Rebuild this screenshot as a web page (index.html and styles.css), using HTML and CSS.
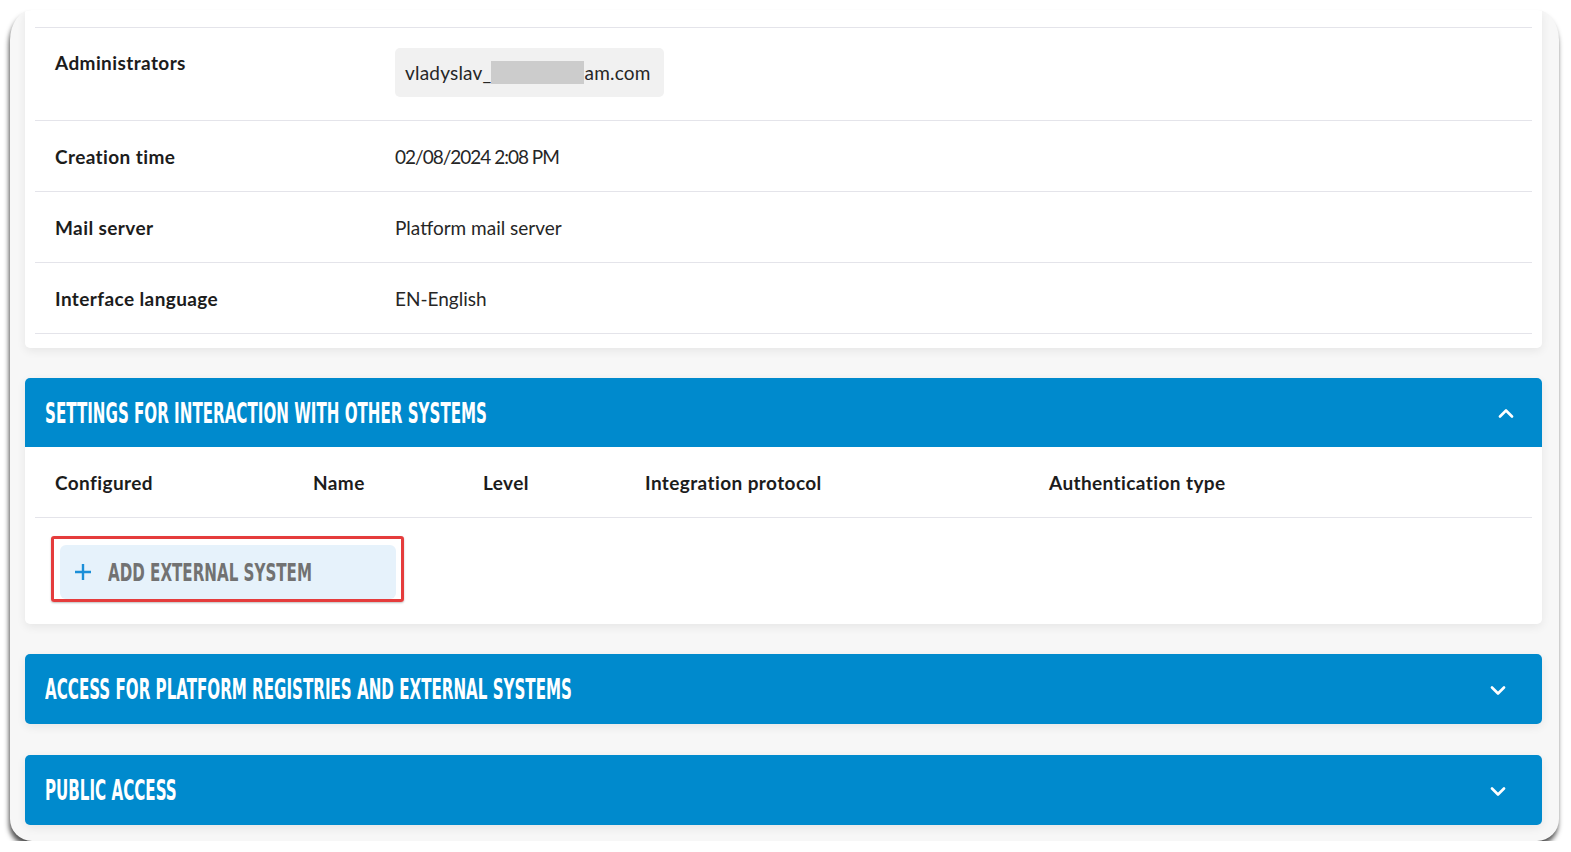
FILE: index.html
```html
<!DOCTYPE html>
<html lang="en">
<head>
<meta charset="utf-8">
<title>Settings</title>
<link rel="stylesheet" href="styles.css">
</head>
<body>
<div class="frame">
  <section class="card info">
    <div class="row row-admin">
      <div class="label label-top">Administrators</div>
      <div class="value"><span class="chip">vladyslav_<span class="redact"></span>am.com</span></div>
    </div>
    <div class="row">
      <div class="label">Creation time</div>
      <div class="value num">02/08/2024 2:08 PM</div>
    </div>
    <div class="row">
      <div class="label">Mail server</div>
      <div class="value">Platform mail server</div>
    </div>
    <div class="row">
      <div class="label">Interface language</div>
      <div class="value">EN-English</div>
    </div>
  </section>

  <section class="card panel">
    <header class="panel-head open">
      <span class="panel-title">SETTINGS FOR INTERACTION WITH OTHER SYSTEMS</span>
      <svg class="chev chev-up" width="16" height="10" viewBox="0 0 16 10"><path d="M2 8.5 L8 2.5 L14 8.5" fill="none" stroke="#fff" stroke-width="2.6" stroke-linecap="round" stroke-linejoin="round"/></svg>
    </header>
    <div class="table-head">
      <div>Configured</div>
      <div>Name</div>
      <div>Level</div>
      <div>Integration protocol</div>
      <div>Authentication type</div>
    </div>
    <div class="add-area">
      <div class="highlight">
        <button class="add-btn">
          <svg class="plus" width="18" height="18" viewBox="0 0 18 18"><path d="M9 1 V17 M1 9 H17" stroke="#1b8fd8" stroke-width="2.4" fill="none"/></svg>
          <span class="add-text">ADD EXTERNAL SYSTEM</span>
        </button>
      </div>
    </div>
  </section>

  <section class="panel-closed">
    <header class="panel-head closed">
      <span class="panel-title">ACCESS FOR PLATFORM REGISTRIES AND EXTERNAL SYSTEMS</span>
      <svg class="chev chev-down" width="16" height="10" viewBox="0 0 16 10"><path d="M2 1.5 L8 7.5 L14 1.5" fill="none" stroke="#fff" stroke-width="2.6" stroke-linecap="round" stroke-linejoin="round"/></svg>
    </header>
  </section>

  <section class="panel-closed">
    <header class="panel-head closed">
      <span class="panel-title">PUBLIC ACCESS</span>
      <svg class="chev chev-down" width="16" height="10" viewBox="0 0 16 10"><path d="M2 1.5 L8 7.5 L14 1.5" fill="none" stroke="#fff" stroke-width="2.6" stroke-linecap="round" stroke-linejoin="round"/></svg>
    </header>
  </section>
</div>
</body>
</html>
```

FILE: styles.css
```css
* { box-sizing: border-box; }

html, body {
  margin: 0;
  padding: 0;
  background: #ffffff;
}

body {
  font-family: Lato, "Noto Sans", Arial, sans-serif;
  color: #1f1f1f;
  font-size: 19px;
}

.frame {
  margin: 10px 12px 0 10px;
  height: 831px;
  background: #f7f7f7;
  border-radius: 0 0 22px 22px;
  border-top-left-radius: 22px 30px;
  border-top-right-radius: 22px 30px;
  box-shadow: -1px 5px 5px rgba(0, 0, 0, 0.68);
  padding: 0 17px 16px 15px;
  overflow: hidden;
}

.card {
  background: #ffffff;
  border-radius: 0 0 5px 5px;
  box-shadow: 0 3px 10px rgba(0, 0, 0, 0.07);
}

.info {
  padding: 17px 10px 14px;
}

.row {
  display: grid;
  grid-template-columns: 340px 1fr;
  padding: 24px 0 22px 20px;
  border-bottom: 1px solid #e4e4ea;
  line-height: 24px;
}

.row:first-child {
  border-top: 1px solid #e4e4ea;
}

.row-admin {
  padding: 20px 0 23px 20px;
}

.label {
  font-weight: 700;
  color: #1c1c1c;
  letter-spacing: 0.4px;
}

.label-top {
  margin-top: 3px;
}

.value {
  color: #262626;
}

.num {
  letter-spacing: -1px;
}

.chip {
  display: inline-flex;
  align-items: center;
  height: 49px;
  padding: 0 13px 0 10px;
  background: #f1f1f1;
  border-radius: 5px;
  letter-spacing: 0.2px;
}

.redact {
  display: inline-block;
  width: 93px;
  height: 23px;
  background: #cccccc;
}

.panel {
  margin-top: 30px;
  border-radius: 5px;
  padding: 0 10px 22px;
}

.panel-head {
  display: flex;
  align-items: center;
  justify-content: space-between;
  height: 69px;
  background: #008acd;
  color: #ffffff;
  padding: 0 28px 0 20px;
}

.panel .panel-head {
  margin: 0 -10px;
  border-radius: 5px 5px 0 0;
  padding-right: 28px;
}

.panel-title {
  display: inline-block;
  font-family: "Liberation Sans Narrow", "DejaVu Sans Condensed", "Liberation Sans", sans-serif;
  font-weight: 700;
  font-size: 28px;
  line-height: 30px;
  margin-top: 2px;
  white-space: nowrap;
  transform: scaleX(0.6);
  transform-origin: left center;
}

.chev {
  display: block;
  flex-shrink: 0;
}

.chev-up { margin-top: 1px; }
.chev-down { margin-right: 8px; margin-top: 3px; }

.panel-closed {
  margin-top: 30px;
}

.panel-closed + .panel-closed {
  margin-top: 31px;
}

.panel-head.closed {
  border-radius: 5px;
  height: 70px;
  box-shadow: 0 3px 10px rgba(0, 0, 0, 0.07);
}

.table-head {
  display: grid;
  grid-template-columns: 258px 170px 162px 404px 1fr;
  padding: 24px 0 22px 20px;
  line-height: 24px;
  font-weight: 700;
  letter-spacing: 0.4px;
  color: #1c1c1c;
  border-bottom: 1px solid #e4e4ea;
}

.add-area {
  padding: 18px 0 0 16px;
}

.highlight {
  display: inline-block;
  border: 3px solid #e53c3c;
  border-radius: 3px;
  padding: 6px 5px 0 6px;
  box-shadow: 0 1px 2px rgba(0, 0, 0, 0.25);
}

.add-btn {
  display: flex;
  align-items: center;
  width: 336px;
  height: 54px;
  border: none;
  border-radius: 6px;
  background: #e6f2fb;
  padding: 0 0 0 14px;
  overflow: hidden;
  cursor: pointer;
}

.plus {
  display: block;
  flex-shrink: 0;
  margin-right: 16px;
}

.add-text {
  display: inline-block;
  flex-shrink: 0;
  font-family: "Liberation Sans Narrow", "DejaVu Sans Condensed", "Liberation Sans", sans-serif;
  font-weight: 700;
  font-size: 24px;
  line-height: 28px;
  margin-top: 2px;
  color: #727272;
  white-space: nowrap;
  transform: scaleX(0.7);
  transform-origin: left center;
}
```
